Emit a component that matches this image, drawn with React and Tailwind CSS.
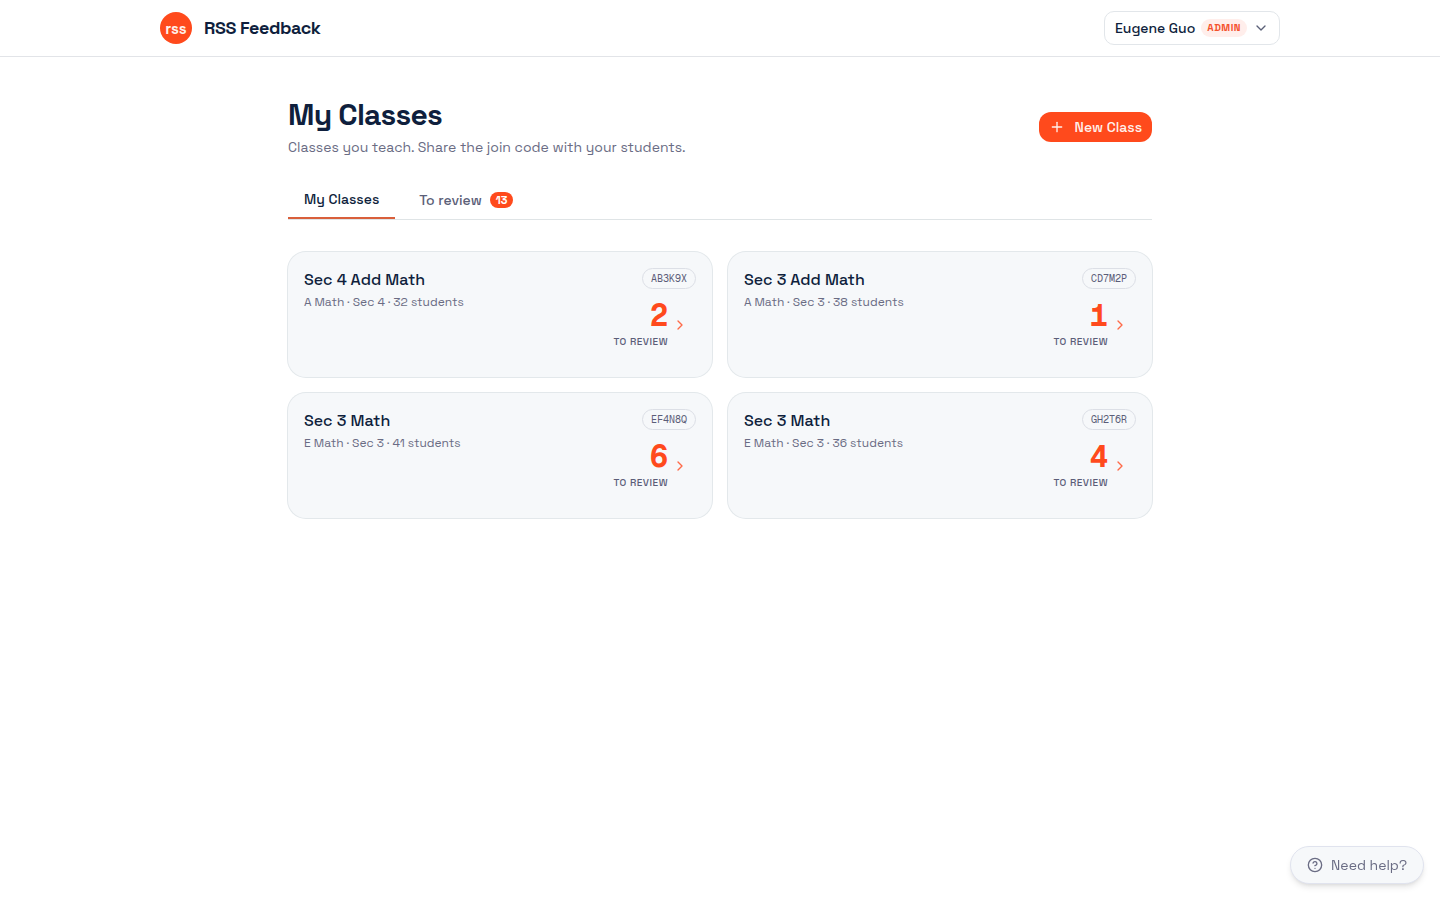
import { useState } from "react";
import { ChevronDown, ChevronRight, CircleHelp, Plus } from "lucide-react";

const classes = [
    { code: "AB3K9X", name: "Sec 4 Add Math", subject: "A Math", level: "Sec 4", students: 32, toReview: 2 },
    { code: "CD7M2P", name: "Sec 3 Add Math", subject: "A Math", level: "Sec 3", students: 38, toReview: 1 },
    { code: "EF4N8Q", name: "Sec 3 Math", subject: "E Math", level: "Sec 3", students: 41, toReview: 6 },
    { code: "GH2T6R", name: "Sec 3 Math", subject: "E Math", level: "Sec 3", students: 36, toReview: 4 },
];

function Header() {
    return (
        <header className="border-b border-[#e2e4e8] bg-white">
            <div className="mx-auto flex h-14 max-w-6xl items-center justify-between px-4">
                <a href="#" className="flex items-center gap-3">
                    <span className="flex size-8 items-center justify-center rounded-full bg-[#ff4a1c] pt-0.5 text-[15px] font-bold text-[#fff1ec]">
                        rss
                    </span>
                    <span className="text-lg font-semibold tracking-tight">RSS Feedback</span>
                </a>
                <button
                    type="button"
                    className="flex h-[34px] items-center gap-1.5 rounded-[10px] border border-[#e2e6ea] px-2.5 text-sm font-medium"
                >
                    Eugene Guo
                    <span className="rounded-full bg-[#ffeeeb] px-1.5 py-0.5 text-[10px] leading-[14px] font-bold tracking-wider text-[#f4512c]">
                        ADMIN
                    </span>
                    <ChevronDown className="size-4 text-[#5b6078]" />
                </button>
            </div>
        </header>
    );
}

function ClassCard({ item }) {
    return (
        <article className="min-h-[125px] rounded-[18px] bg-[#f6f8fa] p-4 ring-1 ring-[#e3e8eb]">
            <div className="flex items-start justify-between">
                <div>
                    <h2 className="text-base font-medium">{item.name}</h2>
                    <p className="mt-0.5 text-xs text-[#6a6c84]">
                        {item.subject} · {item.level} · {item.students} students
                    </p>
                </div>
                <div className="flex flex-col items-end">
                    <span className="rounded-full border border-[#dcdfe6] px-2 font-['Geist_Mono','Liberation_Mono',monospace] text-[10px] leading-[19px] text-[#5b5d78]">
                        {item.code}
                    </span>
                    <a href="#" className="mt-3 flex items-center gap-1 pr-2">
                        <span className="flex flex-col items-end">
                            <span className="font-['Geist_Mono','DejaVu_Sans_Mono',monospace] text-3xl leading-[30px] font-bold text-[#ff4a1c]">
                                {item.toReview}
                            </span>
                            <span className="mt-1 text-[10px] leading-[14px] font-medium tracking-wider text-[#5b5d78]">
                                TO REVIEW
                            </span>
                        </span>
                        <ChevronRight className="size-4 text-[#ff6a48]" />
                    </a>
                </div>
            </div>
        </article>
    );
}

export default function App() {
    const [tab, setTab] = useState("classes");
    const total = classes.reduce((sum, item) => sum + item.toReview, 0);

    return (
        <div className="min-h-screen bg-white font-['Space_Grotesk','Inter',sans-serif] text-[#0f1f3d]">
            <Header />

            <main className="mx-auto max-w-4xl px-4 py-10">
                <div className="flex items-center justify-between">
                    <div>
                        <h1 className="text-3xl leading-9 font-bold tracking-tight">My Classes</h1>
                        <p className="mt-1 text-sm text-[#6a6c84]">
                            Classes you teach. Share the join code with your students.
                        </p>
                    </div>
                    <button
                        type="button"
                        className="flex h-[30px] items-center gap-2.5 rounded-xl bg-[#ff4a1c] px-2.5 text-sm font-medium text-[#fff1ec]"
                    >
                        <Plus className="size-4" />
                        New Class
                    </button>
                </div>

                <div role="tablist" className="mt-6 flex gap-2 border-b border-[#dfe4e6]">
                    <button
                        type="button"
                        role="tab"
                        aria-selected={tab === "classes"}
                        onClick={() => setTab("classes")}
                        className={
                            "flex h-[38px] items-center px-4 text-sm font-medium " +
                            (tab === "classes" ? "border-b-2 border-[#d95f3b]" : "text-[#5b6078]")
                        }
                    >
                        My Classes
                    </button>
                    <button
                        type="button"
                        role="tab"
                        aria-selected={tab === "review"}
                        onClick={() => setTab("review")}
                        className={
                            "flex h-[38px] items-center gap-2 px-4 text-sm font-medium " +
                            (tab === "review" ? "border-b-2 border-[#d95f3b]" : "text-[#5b6078]")
                        }
                    >
                        To review
                        <span className="rounded-full bg-[#ff4a1c] px-1.5 text-[11px] leading-4 font-bold text-white">
                            {total}
                        </span>
                    </button>
                </div>

                <div className="mt-8 grid grid-cols-1 gap-4 md:grid-cols-2">
                    {classes.map((item) => (
                        <ClassCard key={item.code} item={item} />
                    ))}
                </div>
            </main>

            <button
                type="button"
                className="fixed right-4 bottom-4 flex h-[38px] items-center gap-2 rounded-full border border-[#e0e3ee] bg-[#f6f8fa] px-4 text-sm text-[#6a6c84] shadow-md"
            >
                <CircleHelp className="size-4" />
                Need help?
            </button>
        </div>
    );
}
